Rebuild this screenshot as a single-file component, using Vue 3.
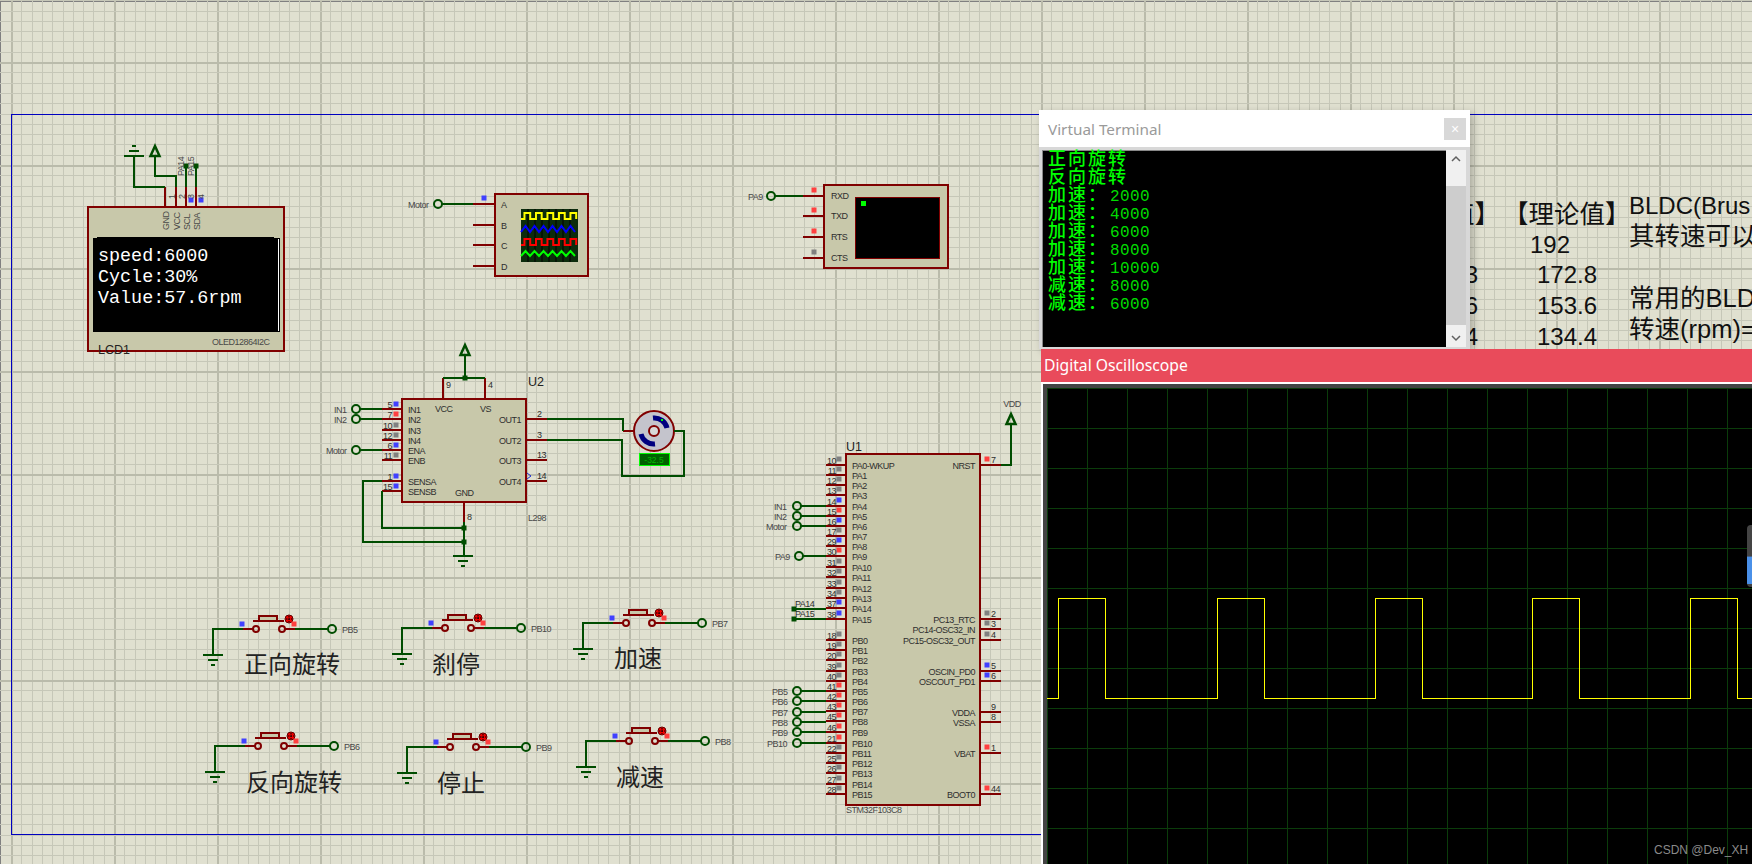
<script setup>
import { computed } from 'vue'

const COL = { b: '#4040ff', r: '#ff4040', g: '#808080' }

// sheet grid, 10.3px minor and 103px major
const gridX = []
const gridY = []
for (let i = 0; i < 171; i++) gridX.push({ at: Math.round(11 + i * 10.3) + 0.5, major: i % 10 === 0 })
for (let i = -6; i < 79; i++) gridY.push({ at: Math.round(62 + i * 10.3) + 0.5, major: ((i % 10) + 10) % 10 === 0 })

const green = []
const red = []
const dots = []
const rings = []
const contacts = []
const squares = []
const labels = []

const wire = (...p) => green.push(p.join(' '))
const lead = (...p) => red.push(p.join(' '))
const sq = (x, y, c) => squares.push({ x: x - 2.5, y: y - 2.5, c: COL[c] })
const t = (x, y, s, cls = 'lbl', anchor = 'start', rot = 0) =>
  labels.push({ x, y, s, cls, anchor, tf: rot ? `rotate(${rot} ${x} ${y})` : null })
const gnd = (x, y, dir = 1) => {
  wire(x - 10, y, x + 10, y)
  wire(x - 5, y + 5 * dir, x + 5, y + 5 * dir)
  wire(x - 2, y + 10 * dir, x + 2, y + 10 * dir)
}
const arrows = []
const power = (x, y) => arrows.push(`${x},${y} ${x - 4.5},${y + 10} ${x + 4.5},${y + 10}`)

// LCD pins and wires
;[165, 176, 186, 196].forEach((x) => lead(x, 187, x, 207))
wire(165, 187, 134, 187, 134, 156)
gnd(134, 156, -1)
power(155, 146)
wire(155, 156, 155, 176, 176, 176, 176, 187)
wire(186, 187, 186, 166)
wire(196, 187, 196, 166)
dots.push([186, 166], [196, 166])
sq(191, 200, 'b')
sq(201, 200, 'b')
t(184, 176, 'PA14', 'sm', 'start', -90)
t(194, 176, 'PA15', 'sm', 'start', -90)
t(175, 199, '1', 'sm', 'start', -90)
t(185, 199, '2', 'sm', 'start', -90)
t(194, 199, '3', 'sm', 'start', -90)
t(204, 199, '4', 'sm', 'start', -90)
t(169, 230, 'GND', 'sm', 'start', -90)
t(180, 230, 'VCC', 'sm', 'start', -90)
t(190, 230, 'SCL', 'sm', 'start', -90)
t(200, 230, 'SDA', 'sm', 'start', -90)
t(212, 345, 'OLED12864I2C', 'sm')
t(98, 354, 'LCD1', 'ref')

// logic analyser style scope symbol
;[204, 225, 245, 266].forEach((y, i) => {
  lead(473, y, 495, y)
  t(501, y + 4, 'ABCD'[i])
})
wire(442, 204, 473, 204)
rings.push([438, 204])
sq(484, 198, 'b')
t(408, 208, 'Motor', 'sm')

// virtual terminal symbol
;[
  [196, 'RXD', 'r'],
  [216, 'TXD', 'r'],
  [237, 'RTS', 'r'],
  [258, 'CTS', 'g']
].forEach(([y, s, c]) => {
  lead(803, y, 824, y)
  sq(814, y - 6, c)
  t(831, y + 3, s)
})
wire(775, 196, 803, 196)
rings.push([771, 196])
t(748, 200, 'PA9', 'sm')

// L298
;[
  [409, '5', 'b', 'IN1'],
  [419, '7', 'r', 'IN2'],
  [430, '10', 'g', 'IN3'],
  [440, '12', 'g', 'IN4'],
  [450, '6', 'b', 'ENA'],
  [460, '11', 'g', 'ENB'],
  [481, '1', 'b', 'SENSA'],
  [491, '15', 'b', 'SENSB']
].forEach(([y, n, c, s]) => {
  lead(382, y, 402, y)
  t(392, y - 1, n, 'lbl', 'end')
  sq(396, y - 5, c)
  t(408, y + 4, s)
})
;[
  [419, '2', 'OUT1'],
  [440, '3', 'OUT2'],
  [460, '13', 'OUT3'],
  [481, '14', 'OUT4']
].forEach(([y, n, s]) => {
  lead(526, y, 547, y)
  t(537, y - 2, n)
  t(521, y + 4, s, 'lbl', 'end')
})
lead(443, 378, 443, 399)
lead(485, 378, 485, 399)
lead(464, 502, 464, 522)
t(435, 412, 'VCC')
t(480, 412, 'VS')
t(455, 496, 'GND')
t(446, 388, '9')
t(488, 388, '4')
t(467, 520, '8')
t(528, 386, 'U2', 'ref')
t(528, 521, 'L298', 'sm')
wire(443, 378, 485, 378)
wire(465, 378, 465, 355)
power(465, 345)
dots.push([465, 378], [464, 528], [464, 542])
wire(464, 522, 464, 556)
gnd(463, 556)
wire(382, 491, 382, 528, 464, 528)
wire(382, 481, 363, 481, 363, 542, 464, 542)
wire(360, 409, 382, 409)
wire(360, 419, 382, 419)
wire(360, 450, 382, 450)
rings.push([356, 409], [356, 419], [356, 450])
t(334, 413, 'IN1', 'sm')
t(334, 423, 'IN2', 'sm')
t(326, 454, 'Motor', 'sm')

// motor
wire(547, 419, 623, 419, 623, 431)
wire(547, 440, 622, 440, 622, 476, 684, 476, 684, 431, 674, 431)
lead(623, 431, 634, 431)

// STM32
const pa = [
  [465, '10', 'g', 'PA0-WKUP'], [475, '11', 'g', 'PA1'], [485, '12', 'g', 'PA2'], [495, '13', 'g', 'PA3'],
  [506, '14', 'b', 'PA4'], [516, '15', 'r', 'PA5'], [526, '16', 'b', 'PA6'], [536, '17', 'g', 'PA7'],
  [546, '29', 'b', 'PA8'], [556, '30', 'r', 'PA9'], [567, '31', 'g', 'PA10'], [577, '32', 'g', 'PA11'],
  [588, '33', 'g', 'PA12'], [598, '34', 'g', 'PA13'], [608, '37', 'b', 'PA14'], [619, '38', 'b', 'PA15'],
  [640, '18', 'g', 'PB0'], [650, '19', 'g', 'PB1'], [660, '20', 'g', 'PB2'], [671, '39', 'g', 'PB3'],
  [681, '40', 'g', 'PB4'], [691, '41', 'r', 'PB5'], [701, '42', 'r', 'PB6'], [711, '43', 'r', 'PB7'],
  [721, '45', 'r', 'PB8'], [732, '46', 'r', 'PB9'], [743, '21', 'r', 'PB10'], [753, '22', 'g', 'PB11'],
  [763, '25', 'g', 'PB12'], [773, '26', 'g', 'PB13'], [784, '27', 'g', 'PB14'], [794, '28', 'g', 'PB15']
]
pa.forEach(([y, n, c, s]) => {
  lead(826, y, 846, y)
  t(836, y - 1, n, 'lbl', 'end')
  sq(839, y - 6, c)
  t(852, y + 4, s)
})
;[
  [465, '7', 'r', 'NRST'], [619, '2', 'g', 'PC13_RTC'], [629, '3', 'g', 'PC14-OSC32_IN'],
  [640, '4', 'g', 'PC15-OSC32_OUT'], [671, '5', 'b', 'OSCIN_PD0'], [681, '6', 'b', 'OSCOUT_PD1'],
  [712, '9', '', 'VDDA'], [722, '8', '', 'VSSA'], [753, '1', 'r', 'VBAT'], [794, '44', 'r', 'BOOT0']
].forEach(([y, n, c, s]) => {
  lead(980, y, 1001, y)
  t(991, y - 2, n)
  if (c) sq(987, y - 6, c)
  t(975, y + 4, s, 'lbl', 'end')
})
t(846, 451, 'U1', 'ref')
t(846, 813, 'STM32F103C8', 'sm')
wire(1001, 465, 1011, 465, 1011, 424)
power(1011, 414)
t(1012, 407, 'VDD', 'sm', 'middle')
;[
  [797, 506, 'IN1', 774], [797, 516, 'IN2', 774], [797, 526, 'Motor', 766], [799, 556, 'PA9', 775],
  [797, 691, 'PB5', 772], [797, 701, 'PB6', 772], [797, 712, 'PB7', 772], [797, 722, 'PB8', 772],
  [797, 732, 'PB9', 772], [797, 743, 'PB10', 767]
].forEach(([x, y, s, lx]) => {
  wire(x + 4, y, 826, y)
  rings.push([x, y])
  t(lx, y + 4, s, 'sm')
})
wire(794, 609, 826, 609)
wire(794, 619, 826, 619)
dots.push([794, 609], [794, 619])
t(795, 607, 'PA14', 'lbl')
t(795, 617, 'PA15', 'lbl')

// push buttons: [x of ground drop, y of wire, net name, caption, caption x, caption y]
const buttons = [
  [213, 629, 'PB5', '正向旋转', 244, 673],
  [402, 628, 'PB10', '刹停', 432, 673],
  [583, 623, 'PB7', '加速', 614, 667],
  [215, 746, 'PB6', '反向旋转', 246, 791],
  [407, 747, 'PB9', '停止', 437, 792],
  [586, 741, 'PB8', '减速', 616, 786]
].map(([x, y, net, cap, cx, cy]) => {
  wire(x, y + 26, x, y, x + 30, y)
  gnd(x, y + 26)
  lead(x + 30, y, x + 40, y)
  contacts.push([x + 43, y], [x + 69, y])
  lead(x + 72, y, x + 82, y)
  wire(x + 82, y, x + 115, y)
  rings.push([x + 119, y])
  lead(x + 40, y - 8, x + 71, y - 8)
  sq(x + 29, y - 5, 'b')
  sq(x + 81, y - 5, 'r')
  t(x + 129, y + 4, net, 'sm')
  t(cx, cy, cap, 'cap')
  return { x, y }
})

// ghost text from the document behind the sheet
const docLines = [
  [1503, 223, '【理论值】', 'docz'], [1500, 223, '值】', 'docz', 'end'],
  [1530, 253, '192', 'doc'], [1537, 283, '172.8', 'doc'], [1537, 314, '153.6', 'doc'], [1537, 345, '134.4', 'doc'],
  [1478, 283, '3', 'doc', 'end'], [1478, 314, '6', 'doc', 'end'], [1478, 345, '4', 'doc', 'end'],
  [1629, 214, 'BLDC(Brus', 'doc'], [1629, 245, '其转速可以', 'docz'], [1629, 307, '常用的BLD', 'docz'],
  [1629, 338, '转速(rpm)=', 'docz']
]
docLines.forEach(([x, y, s, c, a]) => t(x, y, s, c, a || 'start'))

// tiny traces in the scope symbol
const squareWave = (x0, x1, hi, lo, per) => {
  let d = `M${x0} ${lo}`
  for (let x = x0 + per * 0.3; x < x1; x += per) {
    const e = Math.min(x + per / 2, x1)
    d += ` L${x} ${lo} L${x} ${hi} L${e} ${hi} L${e} ${lo}`
  }
  return d
}
const zigzag = (x0, x1, hi, lo, per) => {
  let d = `M${x0} ${lo}`
  let up = true
  for (let x = x0 + per / 2; x <= x1; x += per / 2) {
    d += ` L${x} ${up ? hi : lo}`
    up = !up
  }
  return d
}
const miniTraces = [
  { d: squareWave(521, 578, 213, 219, 11.5), c: '#ffff00' },
  { d: zigzag(521, 578, 226, 232, 9), c: '#0000ff' },
  { d: squareWave(521, 578, 239, 245, 11.5), c: '#ff0000' },
  { d: zigzag(521, 578, 251, 256, 9), c: '#00ff00' }
]
const miniGrid = []
for (let i = 1; i < 8; i++) miniGrid.push(521 + i * 7)

const termLines = [
  ['正向旋转', ''], ['反向旋转', ''], ['加速：', '2000'], ['加速：', '4000'], ['加速：', '6000'],
  ['加速：', '8000'], ['加速：', '10000'], ['减速：', '8000'], ['减速：', '6000']
]

// yellow trace on the big scope, coordinates are local to the screen
const tracePath = computed(() => {
  const rise = [11, 170, 328, 485, 643]
  let d = 'M0 310'
  rise.forEach((x) => {
    d += ` L${x} 310 L${x} 210 L${x + 47} 210 L${x + 47} 310`
  })
  return d + ' L705 310'
})
</script>

<template>
  <div class="desk">
    <svg class="sheet" width="1752" height="864" viewBox="0 0 1752 864">
      <g class="grid">
        <line v-for="g in gridX" :key="'x' + g.at" :x1="g.at" :x2="g.at" y1="0" y2="864" :class="{ major: g.major }" />
        <line v-for="g in gridY" :key="'y' + g.at" :y1="g.at" :y2="g.at" x1="0" x2="1752" :class="{ major: g.major }" />
      </g>
      <rect class="edge" x="11.5" y="114.5" width="1800" height="720" />

      <!-- part bodies -->
      <rect class="body" x="88" y="207" width="196" height="144" />
      <rect class="black" x="93" y="238" width="187" height="94" />
      <rect class="black" x="97" y="237" width="177" height="1" />
      <rect class="white" x="278" y="239" width="1" height="92" />
      <text class="oled" x="98" y="261">speed:6000</text>
      <text class="oled" x="98" y="282">Cycle:30%</text>
      <text class="oled" x="98" y="303">Value:57.6rpm</text>

      <rect class="body" x="495" y="194" width="93" height="82" />
      <rect class="mini" x="521" y="209" width="57" height="53" />
      <line v-for="x in miniGrid" :key="x" class="mini-line" :x1="x" :x2="x" y1="209" y2="262" />
      <path v-for="m in miniTraces" :key="m.c" class="trace" :d="m.d" :stroke="m.c" />

      <rect class="body" x="824" y="185" width="124" height="83" />
      <rect class="vt" x="855.5" y="197.5" width="84" height="61" />
      <rect class="cursor" x="861" y="201" width="5" height="5" />

      <rect class="body" x="402" y="399" width="124" height="103" />
      <path class="hook" d="M527 473l4 3-4 3" />
      <rect class="body" x="846" y="454" width="134" height="351" />

      <!-- motor -->
      <circle class="rotor" cx="654" cy="431" r="20" />
      <path class="winding" d="M653 418A13 13 0 0 1 667 428" />
      <path class="winding" d="M641 434A13 13 0 0 0 655 444" />
      <rect class="cursor" x="661" y="419" width="2" height="2" />
      <circle class="hub" cx="654" cy="431" r="5" />
      <rect class="rpm" x="639.5" y="453.5" width="30" height="12" />
      <text class="rpm-text" x="654" y="463" text-anchor="middle">-32.5</text>

      <!-- wiring -->
      <polyline v-for="(p, i) in red" :key="'r' + i" class="lead" :points="p" />
      <polyline v-for="(p, i) in green" :key="'g' + i" class="net" :points="p" />
      <polygon v-for="a in arrows" :key="a" class="arrow" :points="a" />
      <rect v-for="d in dots" :key="d.join()" class="dot" :x="d[0] - 2.5" :y="d[1] - 2.5" width="5" height="5" />
      <circle v-for="r in rings" :key="r.join()" class="ring" :cx="r[0]" :cy="r[1]" r="4" />
      <circle v-for="c in contacts" :key="c.join()" class="contact" :cx="c[0]" :cy="c[1]" r="3" />

      <!-- button caps and the red marker beside each -->
      <g v-for="b in buttons" :key="b.x + '-' + b.y">
        <rect class="cap-top" :x="b.x + 46" :y="b.y - 13" width="18" height="5" />
        <circle class="marker" :cx="b.x + 76" :cy="b.y - 10" r="4" />
        <path class="marker-x" :d="`M${b.x + 73} ${b.y - 10}h6M${b.x + 76} ${b.y - 13}v6`" />
      </g>

      <rect v-for="(s, i) in squares" :key="'s' + i" :x="s.x" :y="s.y" width="5" height="5" :fill="s.c" />
      <text v-for="(l, i) in labels" :key="'t' + i" :class="l.cls" :x="l.x" :y="l.y" :text-anchor="l.anchor" :transform="l.tf">{{ l.s }}</text>
    </svg>

    <section class="terminal">
      <header class="term-title">
        <span>Virtual Terminal</span>
        <button class="term-close" aria-label="Close">×</button>
      </header>
      <div class="term-body">
        <div class="term-screen">
          <div v-for="(line, i) in termLines" :key="i" class="term-line"><span class="term-cjk">{{ line[0] }}</span><span class="term-num">{{ line[1] }}</span></div>
        </div>
        <div class="scrollbar">
          <svg width="20" height="18" viewBox="0 0 20 18"><path class="chev" d="M6 11l4-4 4 4" /></svg>
          <div class="thumb"></div>
          <svg width="20" height="18" viewBox="0 0 20 18"><path class="chev" d="M6 7l4 4 4-4" /></svg>
        </div>
      </div>
    </section>

    <section class="scope">
      <header class="scope-title">Digital Oscilloscope</header>
      <div class="scope-frame">
        <div class="scope-screen">
          <svg class="scope-trace" width="705" height="476" viewBox="0 0 705 476">
            <path :d="tracePath" />
          </svg>
          <div class="knob"></div>
          <span class="watermark">CSDN @Dev_XH</span>
        </div>
      </div>
    </section>
  </div>
</template>

<style scoped>
.desk {
  position: relative;
  width: 1752px;
  height: 864px;
  overflow: hidden;
  background: #e0e0d0;
  font-family: "Liberation Sans", Arial, sans-serif;
  box-shadow: inset 0 2px 0 #808080, inset 1px 0 0 #808080;
}

.sheet {
  display: block;
}

.grid line {
  stroke: #c6c7b8;
  stroke-width: 1;
  shape-rendering: crispEdges;
}

.grid line.major {
  stroke: #babbab;
  stroke-width: 2;
}

.edge {
  fill: none;
  stroke: #0000c0;
  stroke-width: 1;
  shape-rendering: crispEdges;
}

.body {
  fill: #c8c8aa;
  stroke: #800000;
  stroke-width: 2;
  shape-rendering: crispEdges;
}

.black {
  fill: #000;
}

.white {
  fill: #fff;
}

.oled {
  font-family: "Liberation Mono", monospace;
  font-size: 18.4px;
  fill: #fff;
}

.mini {
  fill: #0c2c0c;
}

.mini-line {
  stroke: #000;
  stroke-width: 1;
}

.trace {
  fill: none;
  stroke-width: 2;
}

.vt {
  fill: #000;
  stroke: #800000;
  stroke-width: 1;
}

.cursor {
  fill: #00ff00;
}

.hook {
  fill: none;
  stroke: #2030d0;
  stroke-width: 1;
}

.rotor {
  fill: #c4c4cc;
  stroke: #800000;
  stroke-width: 2;
}

.winding {
  fill: none;
  stroke: #00007f;
  stroke-width: 5;
}

.hub {
  fill: #d8d8d8;
  stroke: #800000;
  stroke-width: 2;
}

.rpm {
  fill: #006000;
  stroke: #00ff00;
  stroke-width: 1;
}

.rpm-text {
  font-size: 8.5px;
  fill: #00b800;
}

.lead {
  fill: none;
  stroke: #800000;
  stroke-width: 2;
  shape-rendering: crispEdges;
}

.net {
  fill: none;
  stroke: #004d00;
  stroke-width: 2;
  shape-rendering: crispEdges;
}

.arrow {
  fill: none;
  stroke: #004d00;
  stroke-width: 2.5;
}

.dot {
  fill: #004d00;
}

.ring {
  fill: none;
  stroke: #004d00;
  stroke-width: 2;
}

.contact {
  fill: none;
  stroke: #800000;
  stroke-width: 2;
}

.cap-top {
  fill: #c8c8aa;
  stroke: #800000;
  stroke-width: 2;
}

.marker {
  fill: #f00000;
  stroke: #600000;
  stroke-width: 1;
}

.marker-x {
  stroke: #000;
  stroke-width: 1;
  stroke-dasharray: 1.5 1;
  fill: none;
}

.lbl {
  font-size: 9px;
  letter-spacing: -0.5px;
  fill: #2e2e2e;
}

.sm {
  font-size: 9px;
  letter-spacing: -0.5px;
  fill: #484848;
}

.ref {
  font-size: 12.5px;
  fill: #222;
}

.cap {
  font-family: "Noto Sans CJK SC", sans-serif;
  font-size: 24px;
  fill: #222;
}

.doc {
  font-size: 24px;
  fill: #111;
}

.docz {
  font-family: "Liberation Sans", "Noto Sans CJK SC", sans-serif;
  font-size: 25.5px;
  fill: #111;
}

/* ===== Virtual Terminal ===== */
.terminal {
  position: absolute;
  left: 1039px;
  top: 110px;
  width: 431px;
  height: 239px;
  display: flex;
  flex-direction: column;
  background: #f0f0f0;
  box-shadow: 3px 3px 8px rgba(0, 0, 0, 0.25);
}

.term-title {
  height: 37px;
  flex-shrink: 0;
  display: flex;
  align-items: center;
  justify-content: space-between;
  padding: 0 4px 0 9px;
  background: #fff;
  color: #9a9a9a;
  font-family: "Noto Sans", sans-serif;
  font-size: 15.3px;
}

.term-close {
  width: 22px;
  height: 22px;
  border: 0;
  padding: 0;
  background: #d8d8d8;
  color: #fff;
  font-size: 14px;
  line-height: 22px;
}

.term-body {
  flex: 1;
  min-height: 0;
  display: flex;
  padding: 3px 4px 2px 3px;
  background: #d8d8d8;
}

.term-screen {
  flex: 1;
  box-sizing: border-box;
  padding: 0 0 0 5px;
  background: #000;
  border-top: 1px solid #888;
  border-left: 1px solid #888;
}

.term-line {
  height: 18px;
  line-height: 12px;
  white-space: pre;
}

.term-cjk {
  display: inline-block;
  line-height: 12px;
  font-family: "Noto Sans CJK SC", sans-serif;
  font-size: 18px;
  font-weight: 500;
  letter-spacing: 2px;
  color: #00ff00;
}

.term-num {
  display: inline-block;
  line-height: 12px;
  margin-left: 2px;
  font-family: "Liberation Mono", monospace;
  font-size: 16px;
  letter-spacing: 0.4px;
  color: #00dc00;
}

.scrollbar {
  width: 20px;
  display: flex;
  flex-direction: column;
  background: #f0f0f0;
}

.thumb {
  flex: 1;
  margin: 18px 0 4px;
  background: #cdcdcd;
}

.chev {
  fill: none;
  stroke: #606060;
  stroke-width: 1.5;
}

/* ===== Digital Oscilloscope ===== */
.scope {
  position: absolute;
  left: 1041px;
  top: 349px;
  right: 0;
  bottom: 0;
  display: flex;
  flex-direction: column;
}

.scope-title {
  height: 33px;
  flex-shrink: 0;
  padding-left: 3px;
  background: #e94b5b;
  color: #fff;
  font-family: "Noto Sans", sans-serif;
  font-size: 15.7px;
  line-height: 33px;
}

.scope-frame {
  flex: 1;
  min-height: 0;
  display: flex;
  background: #444;
  border-top: 2px solid #fff;
  border-left: 2px solid #fff;
  padding: 4px 0 0 4px;
}

.scope-screen {
  position: relative;
  flex: 1;
  overflow: hidden;
  background-color: #000;
  background-image:
    linear-gradient(90deg, #0b3c0b 1px, transparent 1px),
    linear-gradient(#0b3c0b 1px, transparent 1px);
  background-size: 40px 40px;
}

.scope-trace {
  display: block;
}

.scope-trace path {
  fill: none;
  stroke: #ffff00;
  stroke-width: 1;
  shape-rendering: crispEdges;
}

.knob {
  position: absolute;
  right: 0;
  top: 137px;
  width: 5px;
  height: 62px;
  border-radius: 4px 0 0 4px;
  background: linear-gradient(#444 0, #444 50%, #4a90e8 52%, #4a90e8 95%, #444 95%);
}

.watermark {
  position: absolute;
  left: 607px;
  top: 455px;
  color: #8a8a8a;
  font-size: 12px;
  white-space: nowrap;
}
</style>
